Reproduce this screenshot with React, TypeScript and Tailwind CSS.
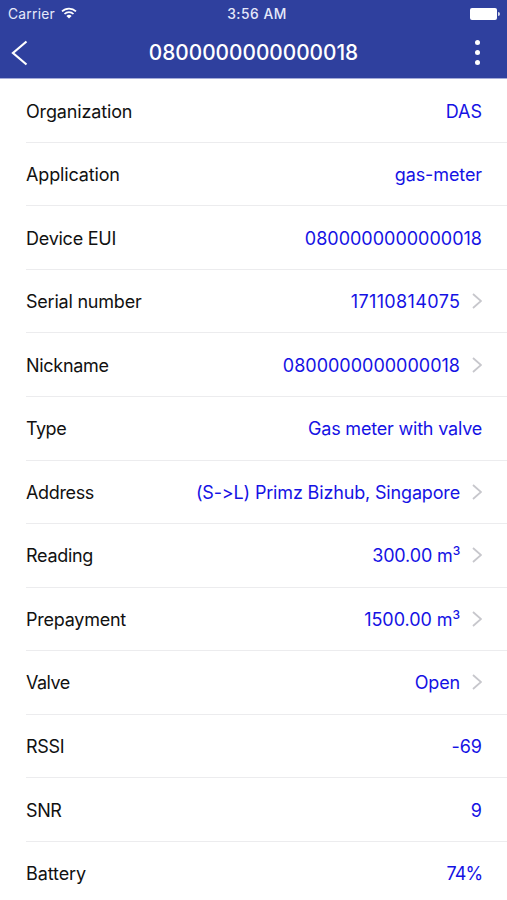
import React from "react";

type Item = {
  label: string;
  value: string;
  sup?: string;
  link?: boolean;
  labelClass?: string;
  valueClass?: string;
};

const items: Item[] = [
  { label: "Organization", value: "DAS" },
  { label: "Application", value: "gas-meter", valueClass: "tracking-[-0.1px]" },
  { label: "Device EUI", value: "0800000000000018", labelClass: "tracking-[-0.25px]" },
  { label: "Serial number", value: "17110814075", link: true, labelClass: "tracking-[-0.22px]", valueClass: "tracking-[0.37px] -mr-[0.37px]" },
  { label: "Nickname", value: "0800000000000018", link: true, labelClass: "tracking-[-0.3px]" },
  { label: "Type", value: "Gas meter with valve", labelClass: "tracking-[-0.5px]", valueClass: "tracking-[-0.2px]" },
  { label: "Address", value: "(S->L) Primz Bizhub, Singapore", link: true, labelClass: "tracking-[-0.35px]", valueClass: "tracking-[-0.16px]" },
  { label: "Reading", value: "300.00 m", sup: "3", link: true, labelClass: "tracking-[-0.3px]", valueClass: "tracking-[-0.15px]" },
  { label: "Prepayment", value: "1500.00 m", sup: "3", link: true, labelClass: "tracking-[-0.25px]", valueClass: "tracking-[-0.05px]" },
  { label: "Valve", value: "Open", link: true, labelClass: "tracking-[-0.5px]", valueClass: "tracking-[-0.15px]" },
  { label: "RSSI", value: "-69", labelClass: "tracking-[-0.3px]" },
  { label: "SNR", value: "9", labelClass: "tracking-[-0.4px]" },
  { label: "Battery", value: "74%", labelClass: "tracking-[-0.1px]", valueClass: "tracking-[-0.9px] mr-[-0.3px]" },
];

function Wifi() {
  return (
    <svg width="16" height="12" viewBox="0 0 16 12" fill="none" stroke="#fff" strokeWidth="1.7">
      <path d="M1 4.4a10 10 0 0 1 14 0" />
      <path d="M3.5 7a6.4 6.4 0 0 1 9 0" />
      <path d="M8 11.6 5.4 8.9a3.8 3.8 0 0 1 5.2 0z" fill="#fff" stroke="none" />
    </svg>
  );
}

function StatusBar() {
  return (
    <div className="grid h-[27px] grid-cols-3 items-center pl-2 pr-[7px] text-[13.8px] leading-none text-[#e6e9fa]">
      <div className="flex items-center gap-[6px]">
        <span className="pt-[2px] tracking-[0.25px]">Carrier</span>
        <Wifi />
      </div>
      <div className="pl-[6px] pt-[2px] text-center font-medium tracking-[0.5px]">3:56 AM</div>
      <div className="flex items-center justify-end gap-px">
        <span className="h-3 w-[27px] rounded-[2px] bg-white" />
        <span className="h-1 w-[2px] rounded-r-full bg-white/80" />
      </div>
    </div>
  );
}

function NavBar() {
  return (
    <div className="flex h-[51px] items-center justify-between pl-[11px] pr-[27px]">
      <svg width="18" height="26" viewBox="0 0 18 26" fill="none" stroke="#fff" strokeWidth="2.2">
        <path d="M15.5 1.5 2 13l13.5 11.5" />
      </svg>
      <h1 className="pl-[3px] pt-[2px] text-[20.8px] font-medium leading-none text-white">0800000000000018</h1>
      <div className="flex flex-col gap-[5px]">
        <span className="size-[5px] rounded-full bg-white" />
        <span className="size-[5px] rounded-full bg-white" />
        <span className="size-[5px] rounded-full bg-white" />
      </div>
    </div>
  );
}

function Row({ item, last }: { item: Item; last: boolean }) {
  return (
    <li
      className={`ml-[26px] flex h-[63.55px] items-center justify-between border-b pr-[25px] ${last ? "border-transparent" : "border-[#ececee]"}`}
    >
      <span className={`whitespace-nowrap pt-[2px] text-[#111] ${item.labelClass ?? "tracking-[-0.15px]"}`}>
        {item.label}
      </span>
      <span className="flex items-center gap-[12px] whitespace-nowrap text-[#1512e4]">
        <span className={`pt-[2px] ${item.valueClass ?? ""}`}>
          {item.value}
          {item.sup && <sup className="-top-[7px] text-[12px] font-medium">{item.sup}</sup>}
        </span>
        {item.link && (
          <svg width="10" height="16" viewBox="0 0 10 16" fill="none" stroke="#c7c7cc" strokeWidth="1.8">
            <path d="M1 1l8 7-8 7" />
          </svg>
        )}
      </span>
    </li>
  );
}

export default function App() {
  return (
    <div className="h-[900px] w-[507px] overflow-hidden bg-white font-['Inter',sans-serif] [font-feature-settings:'calt'_0]">
      <header className="h-[79px] border-b border-[#a4abd8] bg-[#2f409e]">
        <StatusBar />
        <NavBar />
      </header>
      <ul className="pt-[0.3px] text-[18px] leading-[22px]">
        {items.map((item, i) => (
          <Row key={item.label} item={item} last={i === items.length - 1} />
        ))}
      </ul>
    </div>
  );
}
